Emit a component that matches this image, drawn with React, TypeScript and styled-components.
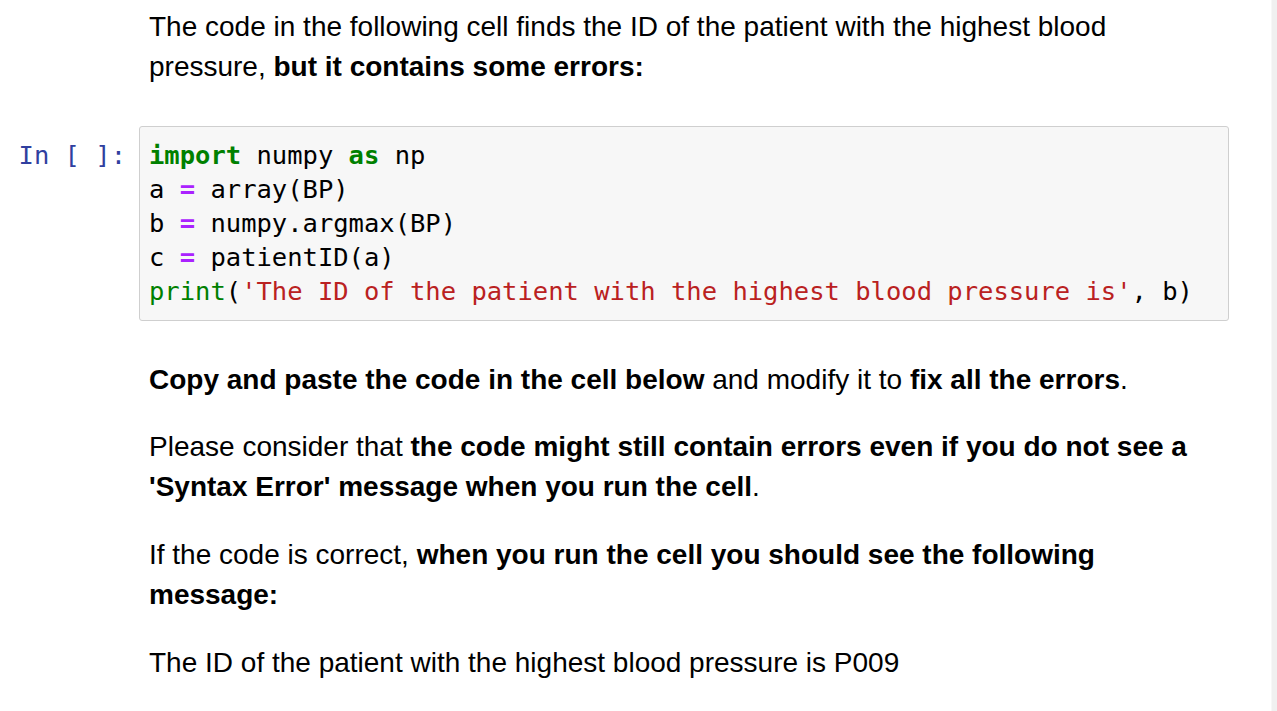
import styled, { createGlobalStyle } from "styled-components";

const GlobalStyle = createGlobalStyle`
  html, body {
    margin: 0;
    padding: 0;
    background: #ffffff;
  }
  body {
    font-family: "Liberation Sans", Arial, sans-serif;
  }
`;

const Page = styled.div`
  display: flex;
  width: 1277px;
  height: 711px;
  overflow: hidden;
  background: #ffffff;
`;

const Notebook = styled.div`
  flex: 1;
  padding-top: 7px;
  border-right: 1px solid #f7f7f7;
`;

const ScrollTrack = styled.div`
  width: 5px;
  background: #f0f0f0;
`;

const Cell = styled.div<{ $gap?: number }>`
  display: flex;
  align-items: flex-start;
  margin-bottom: ${(p) => p.$gap ?? 0}px;
`;

const Prompt = styled.div`
  width: 139px;
  flex-shrink: 0;
  box-sizing: border-box;
  padding-right: 13px;
  padding-top: 12px;
  text-align: right;
  font-family: "DejaVu Sans Mono", "Liberation Mono", monospace;
  font-size: 25.5px;
  line-height: 34px;
  color: #303f9f;
  white-space: pre;
`;

const Markdown = styled.div`
  width: 1060px;
  padding-left: 10px;
  font-size: 28px;
  line-height: 40px;
  color: #000000;
`;

const Para = styled.p<{ $top?: number }>`
  margin: ${(p) => p.$top ?? 0}px 0 0 0;
`;

const CodeBox = styled.div`
  width: 1090px;
  box-sizing: border-box;
  background: #f7f7f7;
  border: 1px solid #cfcfcf;
  border-radius: 3px;
  padding: 11px 9px 12px 9px;
  font-family: "DejaVu Sans Mono", "Liberation Mono", monospace;
  font-size: 25.5px;
  line-height: 34px;
  color: #000000;
  white-space: pre;
`;

const Kw = styled.span`
  color: #008000;
  font-weight: bold;
`;

const Op = styled.span`
  color: #aa22ff;
  font-weight: bold;
`;

const Builtin = styled.span`
  color: #008000;
`;

const Str = styled.span`
  color: #ba2121;
`;

export default function App() {
  return (
    <>
      <GlobalStyle />
      <Page>
        <Notebook>
          <Cell $gap={39}>
            <Prompt />
            <Markdown>
              <Para>
                The code in the following cell finds the ID of the patient with
                the highest blood pressure, <b>but it contains some errors:</b>
              </Para>
            </Markdown>
          </Cell>

          <Cell $gap={39}>
            <Prompt>In [ ]:</Prompt>
            <CodeBox>
              <div>
                <Kw>import</Kw> numpy <Kw>as</Kw> np
              </div>
              <div>
                a <Op>=</Op> array(BP)
              </div>
              <div>
                b <Op>=</Op> numpy.argmax(BP)
              </div>
              <div>
                c <Op>=</Op> patientID(a)
              </div>
              <div>
                <Builtin>print</Builtin>(
                <Str>'The ID of the patient with the highest blood pressure is'</Str>
                , b)
              </div>
            </CodeBox>
          </Cell>

          <Cell>
            <Prompt />
            <Markdown>
              <Para>
                <b>Copy and paste the code in the cell below</b> and modify it
                to <b>fix all the errors</b>.
              </Para>
              <Para $top={27}>
                Please consider that{" "}
                <b>
                  the code might still contain errors even if you do not see a
                  'Syntax Error' message when you run the cell
                </b>
                .
              </Para>
              <Para $top={28}>
                If the code is correct,{" "}
                <b>when you run the cell you should see the following message:</b>
              </Para>
              <Para $top={28}>
                The ID of the patient with the highest blood pressure is P009
              </Para>
            </Markdown>
          </Cell>
        </Notebook>
        <ScrollTrack />
      </Page>
    </>
  );
}
